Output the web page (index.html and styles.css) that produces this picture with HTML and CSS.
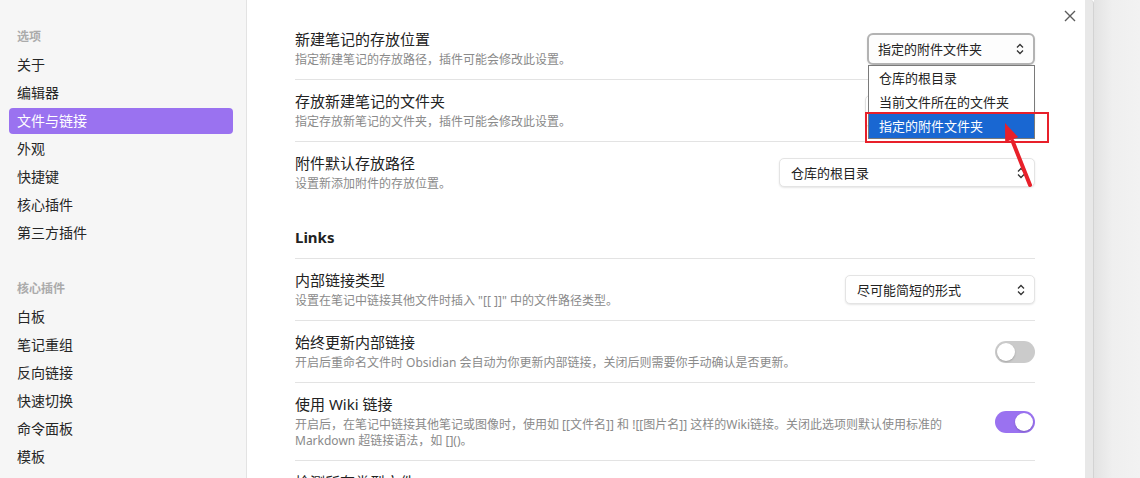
FILE: index.html
```html
<!DOCTYPE html>
<html lang="zh-CN">
<head>
    <meta charset="UTF-8">
    <meta name="viewport" content="width=device-width, initial-scale=1.0">
    <title>设置 - 文件与链接</title>
    <link rel="stylesheet" href="styles.css">
</head>
<body>
    <div class="sidebar">
        <div class="nav-title">选项</div>
        <div class="nav-item">关于</div>
        <div class="nav-item">编辑器</div>
        <div class="nav-item active">文件与链接</div>
        <div class="nav-item">外观</div>
        <div class="nav-item">快捷键</div>
        <div class="nav-item">核心插件</div>
        <div class="nav-item">第三方插件</div>

        <div class="nav-title group">核心插件</div>
        <div class="nav-item">白板</div>
        <div class="nav-item">笔记重组</div>
        <div class="nav-item">反向链接</div>
        <div class="nav-item">快速切换</div>
        <div class="nav-item">命令面板</div>
        <div class="nav-item">模板</div>
    </div>

    <div class="content">
        <div class="setting-item first">
            <div class="setting-info">
                <div class="setting-name">新建笔记的存放位置</div>
                <div class="setting-desc">指定新建笔记的存放路径，插件可能会修改此设置。</div>
            </div>
            <div class="setting-control">
                <div class="dropdown focused">
                    <span>指定的附件文件夹</span>
                    <svg class="chevron" width="10" height="14" viewBox="0 0 10 14"><path d="M2 5.5 L5 2.5 L8 5.5 M2 8.5 L5 11.5 L8 8.5" stroke="#333" stroke-width="1.3" fill="none"/></svg>
                </div>
                <div class="dropdown-menu">
                    <div class="menu-option">仓库的根目录</div>
                    <div class="menu-option">当前文件所在的文件夹</div>
                    <div class="menu-option selected">指定的附件文件夹</div>
                </div>
            </div>
        </div>

        <div class="setting-item">
            <div class="setting-info">
                <div class="setting-name">存放新建笔记的文件夹</div>
                <div class="setting-desc">指定存放新笔记的文件夹，插件可能会修改此设置。</div>
            </div>
            <div class="setting-control">
                <div class="text-input"></div>
            </div>
        </div>

        <div class="setting-item">
            <div class="setting-info">
                <div class="setting-name">附件默认存放路径</div>
                <div class="setting-desc">设置新添加附件的存放位置。</div>
            </div>
            <div class="setting-control">
                <div class="dropdown wide">
                    <span>仓库的根目录</span>
                    <svg class="chevron" width="10" height="14" viewBox="0 0 10 14"><path d="M2 5.5 L5 2.5 L8 5.5 M2 8.5 L5 11.5 L8 8.5" stroke="#333" stroke-width="1.3" fill="none"/></svg>
                </div>
            </div>
        </div>

        <div class="setting-heading">Links</div>

        <div class="setting-item">
            <div class="setting-info">
                <div class="setting-name">内部链接类型</div>
                <div class="setting-desc">设置在笔记中链接其他文件时插入 "[[ ]]" 中的文件路径类型。</div>
            </div>
            <div class="setting-control">
                <div class="dropdown mid">
                    <span>尽可能简短的形式</span>
                    <svg class="chevron" width="10" height="14" viewBox="0 0 10 14"><path d="M2 5.5 L5 2.5 L8 5.5 M2 8.5 L5 11.5 L8 8.5" stroke="#333" stroke-width="1.3" fill="none"/></svg>
                </div>
            </div>
        </div>

        <div class="setting-item">
            <div class="setting-info">
                <div class="setting-name">始终更新内部链接</div>
                <div class="setting-desc">开启后重命名文件时 Obsidian 会自动为你更新内部链接，关闭后则需要你手动确认是否更新。</div>
            </div>
            <div class="setting-control">
                <div class="toggle"></div>
            </div>
        </div>

        <div class="setting-item">
            <div class="setting-info">
                <div class="setting-name">使用 Wiki 链接</div>
                <div class="setting-desc">开启后，在笔记中链接其他笔记或图像时，使用如 [[文件名]] 和 ![[图片名]] 这样的Wiki链接。关闭此选项则默认使用标准的 Markdown 超链接语法，如 []()。</div>
            </div>
            <div class="setting-control">
                <div class="toggle on"></div>
            </div>
        </div>

        <div class="setting-item">
            <div class="setting-info">
                <div class="setting-name">检测所有类型文件</div>
                <div class="setting-desc">&nbsp;</div>
            </div>
        </div>

        <div class="close-btn">
            <svg width="12" height="12" viewBox="0 0 12 12"><path d="M1 1 L11 11 M11 1 L1 11" stroke="#5c5c5c" stroke-width="1.4" fill="none"/></svg>
        </div>

        <div class="mark-box"></div>
        <svg class="mark-arrow" width="40" height="75" viewBox="0 0 40 75">
            <line x1="35" y1="67" x2="17.5" y2="23" stroke="#e8202a" stroke-width="4" stroke-linecap="round"/>
            <polygon points="10,5 23.2,19.1 10.2,24.3" fill="#e8202a"/>
        </svg>
    </div>

    <div class="scroll-track"></div>
    <div class="backdrop"></div>
</body>
</html>
```

FILE: styles.css
```css
body {
    margin: 0;
    height: 478px;
    overflow: hidden;
    display: flex;
    font-family: "Noto Sans", "Noto Sans CJK SC", sans-serif;
    color: #222;
    background: #fff;
}
.sidebar {
    flex: 0 0 246px;
    background: #f6f6f6;
    border-right: 1px solid #e3e3e3;
    padding-top: 28px;
    box-sizing: content-box;
}
.nav-title {
    font-size: 12px;
    font-weight: bold;
    line-height: 18px;
    color: #ababab;
    padding-left: 17px;
    margin-bottom: 6px;
}
.nav-title.group { margin-top: 34px; }
.nav-item {
    height: 26px;
    line-height: 26px;
    font-size: 14px;
    color: #262626;
    margin: 0 13px 2px 9px;
    padding-left: 8px;
    border-radius: 4px;
}
.nav-item.active {
    background: #9a72f0;
    color: #fff;
}
.content {
    flex: 0 0 838px;
    box-sizing: border-box;
    padding: 18px 50px 0 48px;
    position: relative;
    background: #fff;
}
.close-btn {
    position: absolute;
    top: 10px;
    left: 817px;
    width: 12px;
    height: 12px;
    line-height: 0;
}
.setting-item {
    display: flex;
    align-items: center;
    gap: 24px;
    padding: 11px 0;
    border-top: 1px solid #e3e3e3;
}
.setting-item.first { border-top: none; }
.setting-info { flex: 1 1 auto; }
.setting-name {
    font-size: 15px;
    line-height: 21px;
    color: #222;
}
.setting-desc {
    font-size: 12px;
    line-height: 16px;
    margin-top: 2px;
    color: #8a8a8a;
}
.setting-heading {
    font-size: 15px;
    font-weight: bold;
    line-height: 21px;
    padding: 24px 0 10px;
    color: #222;
}
.setting-control {
    flex: 0 0 auto;
    position: relative;
}
.dropdown {
    display: flex;
    align-items: center;
    justify-content: space-between;
    box-sizing: border-box;
    height: 29px;
    padding: 0 8px 0 11px;
    font-size: 13px;
    color: #222;
    background: #fff;
    border: 1px solid #e4e4e4;
    border-radius: 5px;
    box-shadow: 0 1px 2px rgba(0, 0, 0, 0.1);
}
.dropdown.wide { width: 256px; }
.dropdown.mid { width: 190px; }
.dropdown.focused {
    width: 168px;
    height: 32px;
    padding-left: 9px;
    border: 2px solid #b3b3b3;
    border-radius: 6px;
    background: #fdfdfd;
}
.chevron { flex: 0 0 auto; }
.dropdown-menu {
    position: absolute;
    top: 32px;
    left: 1px;
    right: 0;
    background: #fff;
    border: 1px solid #7a7a7a;
    z-index: 2;
}
.menu-option {
    height: 24px;
    line-height: 24px;
    font-size: 13px;
    padding-left: 10px;
    color: #222;
}
.menu-option.selected {
    background: #1967d2;
    color: #fff;
}
.text-input {
    width: 170px;
    height: 32px;
    box-sizing: border-box;
    border: 1px solid #e0e0e0;
    border-radius: 5px;
    box-shadow: 0 1px 2px rgba(0, 0, 0, 0.08);
}
.toggle {
    width: 40px;
    height: 22px;
    border-radius: 11px;
    background: #cbcbcb;
    position: relative;
}
.toggle::after {
    content: "";
    position: absolute;
    top: 2px;
    left: 2px;
    width: 18px;
    height: 18px;
    border-radius: 50%;
    background: #fff;
    box-shadow: 0 1px 2px rgba(0, 0, 0, 0.2);
}
.toggle.on { background: #9a72f0; }
.toggle.on::after { left: 20px; }
.mark-box {
    position: absolute;
    left: 618px;
    top: 112px;
    width: 180px;
    height: 27px;
    border: 2px solid #e8202a;
    z-index: 3;
}
.mark-arrow {
    position: absolute;
    left: 748px;
    top: 118px;
    z-index: 4;
}
.scroll-track {
    flex: 0 0 8px;
    background: #e8e8e8;
    border-right: 1px solid #d3d3d3;
    border-top-right-radius: 4px;
}
.backdrop {
    flex: 1;
    background: linear-gradient(to right, #e3e3e3, #efefef 40%, #f2f2f2);
}
```
